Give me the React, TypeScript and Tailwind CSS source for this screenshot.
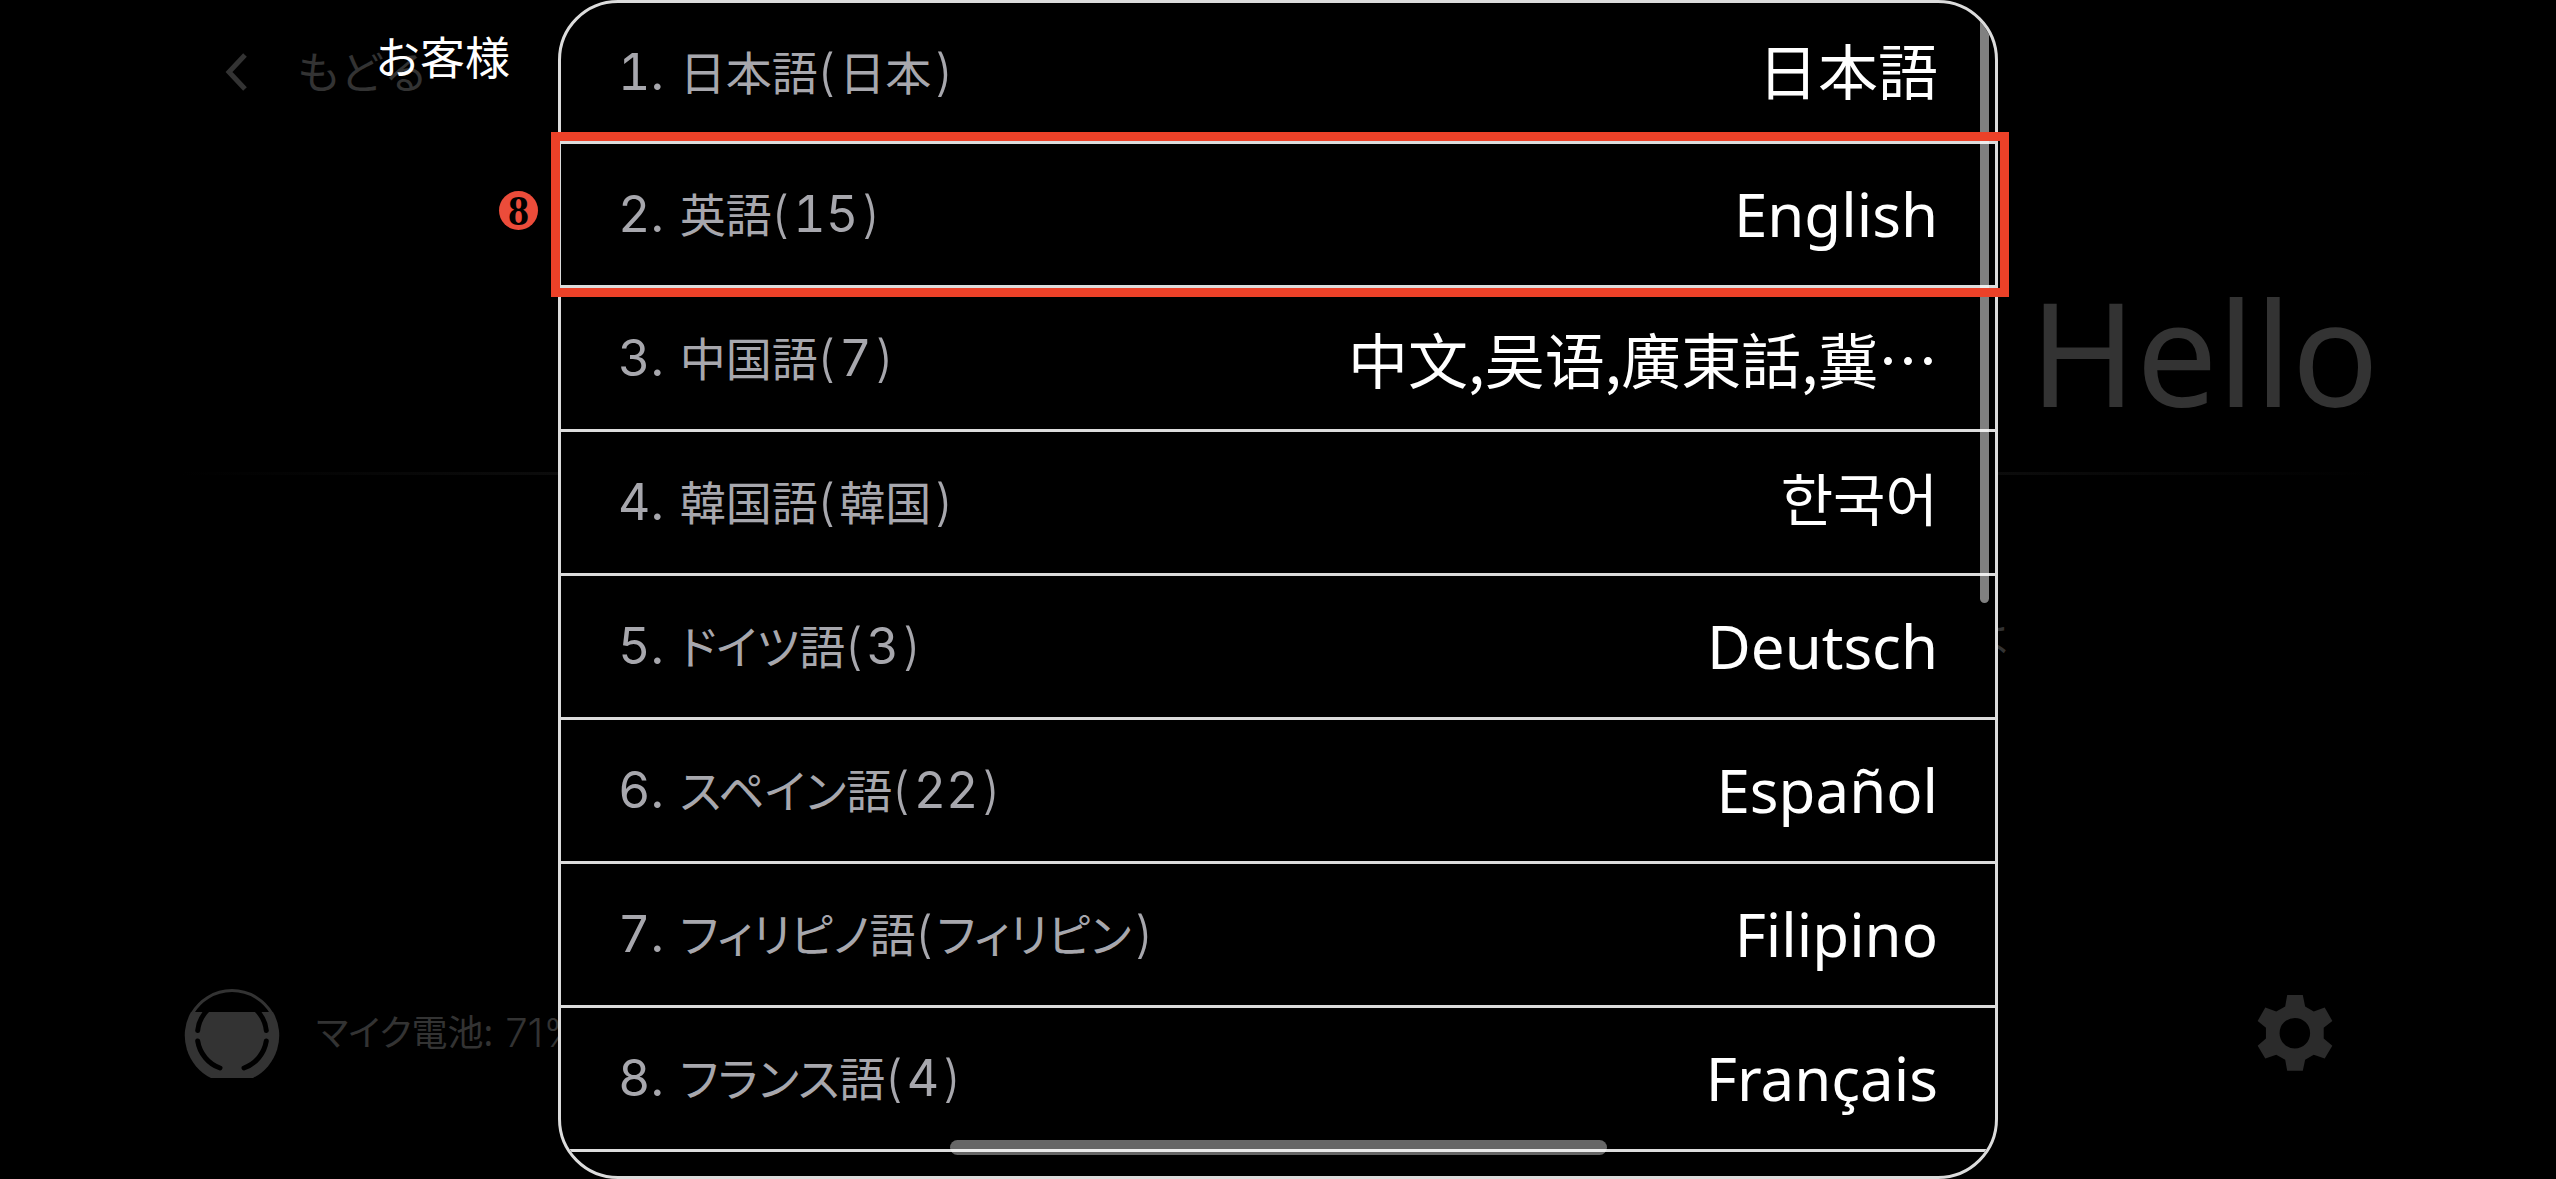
import React from 'react';
import clsx from 'clsx';

type Language = {
  name: string;
  detail: string;
  native: string;
  nativeStyle?: string;
};

const languages: Language[] = [
  { name: '日本語', detail: '日本', native: '日本語' },
  { name: '英語', detail: '15', native: 'English' },
  {
    name: '中国語',
    detail: '7',
    native: '中文,吴语,廣東話,冀…',
    nativeStyle: "text-[60px] font-['Noto_Sans_CJK_SC',sans-serif]",
  },
  {
    name: '韓国語',
    detail: '韓国',
    native: '한국어',
    nativeStyle: "pb-3 text-[57px] font-['Noto_Sans_CJK_KR',sans-serif]",
  },
  { name: 'ドイツ語', detail: '3', native: 'Deutsch' },
  { name: 'スペイン語', detail: '22', native: 'Español' },
  { name: 'フィリピノ語', detail: 'フィリピン', native: 'Filipino' },
  { name: 'フランス語', detail: '4', native: 'Français' },
];

const BackIcon = () => (
  <svg viewBox="0 0 24 38" className="h-[38px] w-6" fill="none" stroke="currentColor" strokeWidth="5">
    <path d="M20 2 4 19l16 17" />
  </svg>
);

const MicIcon = () => (
  <svg viewBox="0 0 96 90" className="h-[90px] w-24 text-[#333333]">
    <path d="M7 24H89A47.5 47.5 0 0 1 69 90H27A47.5 47.5 0 0 1 7 24Z" fill="currentColor" />
    <path d="M8.500 25A46 46 0 0 1 87.500 25" fill="none" stroke="currentColor" strokeWidth="3" />
    <g fill="none" stroke="#000" strokeWidth="5" strokeLinecap="round">
      <path d="M13.700 42.500A34.500 34.500 0 0 1 24.500 21" />
      <path d="M82.300 42.500A34.500 34.500 0 0 0 71.500 21" />
      <path d="M13.700 53A34.500 34.500 0 0 0 36 80" />
      <path d="M82.300 53A34.500 34.500 0 0 1 60 80" />
    </g>
  </svg>
);

const GearIcon = () => (
  <svg viewBox="172 101 227 229" className="h-[76px] w-[76px]" fill="currentColor">
    <path
      fillRule="evenodd"
      d="M262 101H309L316 136 342 151 375 139 398 179 372 200V232L398 254 375 292 342 281 316 296 309 329H262L256 296 229 281 196 292 173 254 198 232V200L173 179 196 139 229 151 256 136ZM285 170a46 46 0 1 0 0 92 46 46 0 0 0 0-92Z"
    />
  </svg>
);

const LanguageRow = ({ index, language }: { index: number; language: Language }) => (
  <li>
    <button
      type="button"
      className={clsx(
        'flex w-full items-center justify-between border-b-[3px] border-[#dcdcdc] px-[57px] pb-px',
        index === 1 ? 'h-[141px]' : 'h-36',
      )}
    >
      <span className="flex items-center text-[46px] leading-[60px] text-[#a7a7ad]">
        <span className="mr-4 font-['Inter',sans-serif] text-[50px] tabular-nums">{index}.</span>
        <span className="[font-feature-settings:'palt']">{language.name}</span>
        <span className="mr-1 font-['Inter',sans-serif] text-[50px] font-light">(</span>
        <span
          className={
            /\d/.test(language.detail)
              ? "font-['Inter',sans-serif] text-[50px] tabular-nums"
              : "[font-feature-settings:'palt']"
          }
        >
          {language.detail}
        </span>
        <span className="ml-1 font-['Inter',sans-serif] text-[50px] font-light">)</span>
      </span>
      <span className={clsx('leading-[82px] text-white', language.nativeStyle ?? 'text-[60px]')}>
        {language.native}
      </span>
    </button>
  </li>
);

export default function App() {
  return (
    <div className="relative flex h-screen justify-center overflow-hidden bg-black font-['Noto_Sans','Noto_Sans_CJK_JP',sans-serif]">
      {/* dimmed conversation screen */}
      <div className="flex w-full flex-col text-[#333333]">
        <header className="flex h-[142px] items-center pt-[2px] pl-[225px]">
          <button type="button" className="flex items-center gap-12 text-[44px] leading-[60px]">
            <BackIcon />
            もどる
          </button>
        </header>
        <div className="flex h-[330px] items-center justify-end pt-[87px] pr-[177px]">
          <p className="text-[144px] leading-[196px]">Hello</p>
        </div>
        <div className="mx-[180px] h-[3px] bg-linear-to-r from-transparent via-[#222222] to-transparent" />
        <div className="flex flex-1 justify-center pt-[133px]">
          <p className="w-[1460px] text-right text-[45px] leading-[60px]">こんにちは</p>
        </div>
        <footer className="flex items-center justify-between pr-[223px] pb-[101px] pl-[184px]">
          <div className="flex items-center gap-9 text-[36px] leading-[50px]">
            <MicIcon />
            <p className="flex items-center">
              <span className="[font-feature-settings:'palt']">マイク電池:</span>
              <span className="ml-3 font-['Inter',sans-serif] text-[40px] font-light">71%</span>
            </p>
          </div>
          <button type="button" aria-label="設定" className="text-[#2b2b2b]">
            <GearIcon />
          </button>
        </footer>
      </div>

      {/* language picker */}
      <div className="absolute inset-y-0 w-full max-w-[1440px]">
        <p className="absolute top-7 right-full mr-12 text-[45px] leading-[60px] whitespace-nowrap text-white">お客様</p>
        <div className="relative h-full overflow-hidden rounded-[60px] border-[3px] border-[#dcdcdc] bg-black">
          <ul>
            {languages.map((language, i) => (
              <LanguageRow key={language.name} index={i + 1} language={language} />
            ))}
          </ul>
          <div className="absolute top-2 right-[6px] h-[592px] w-[9px] rounded-full bg-white/50" />
        </div>
        <div className="absolute top-[132px] -right-[11px] -left-[7px] h-[165px] border-[9px] border-[#ec4128]" />
        <div className="absolute top-[191px] right-full mr-5 flex size-[39px] items-center justify-center rounded-full bg-[#ec4c3a] font-['Liberation_Serif',serif] text-[42px] leading-9 font-bold text-black">
          8
        </div>
      </div>

      <div className="absolute bottom-6 h-[15px] w-[657px] rounded-full bg-white/40" />
    </div>
  );
}
